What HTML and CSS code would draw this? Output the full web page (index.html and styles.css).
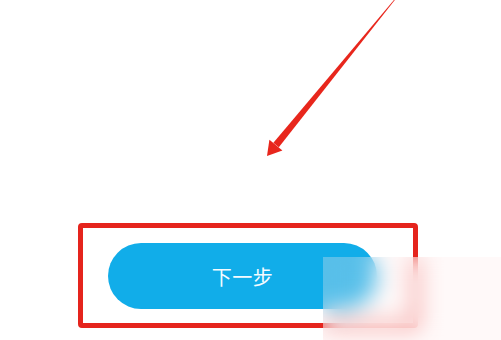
FILE: index.html
```html
<!DOCTYPE html>
<html lang="zh">
<head>
<meta charset="utf-8">
<link rel="stylesheet" href="styles.css">
</head>
<body>
<div class="page">
  <div class="highlight">
    <div class="next-btn">下一步</div>
  </div>
  <svg class="arrow" width="501" height="340" viewBox="0 0 501 340">
    <polygon fill="#e8261c" points="396.8,-2.5 395.2,-1.5 273.4,142.8 278.8,147.3"/>
    <polygon fill="#e8261c" points="267,156 269.4,139.8 282.4,150.5"/>
  </svg>
  <div class="blur-mark"></div>
</div>
</body>
</html>
```
FILE: styles.css
```css
html, body {
  margin: 0;
  padding: 0;
  background: #ffffff;
}
.page {
  position: relative;
  width: 501px;
  height: 340px;
  overflow: hidden;
  padding-top: 223px;
  box-sizing: border-box;
}
.highlight {
  margin-left: 78px;
  width: 340px;
  height: 105px;
  box-sizing: border-box;
  border: 5px solid #e5241d;
  border-radius: 4px;
  padding: 15px 36px 14px 25px;
}
.next-btn {
  height: 66px;
  border-radius: 33px;
  background: #11ade9;
  color: #f4fbff;
  font-family: "Noto Sans CJK SC", "Noto Sans", sans-serif;
  font-size: 20px;
  display: flex;
  align-items: center;
  justify-content: center;
  letter-spacing: 0.5px;
}
.arrow {
  position: absolute;
  left: 0;
  top: 0;
}
.blur-mark {
  position: absolute;
  left: 323px;
  top: 257px;
  width: 178px;
  height: 83px;
  backdrop-filter: blur(11px);
  background: rgba(255, 236, 236, 0.3);
}
```
